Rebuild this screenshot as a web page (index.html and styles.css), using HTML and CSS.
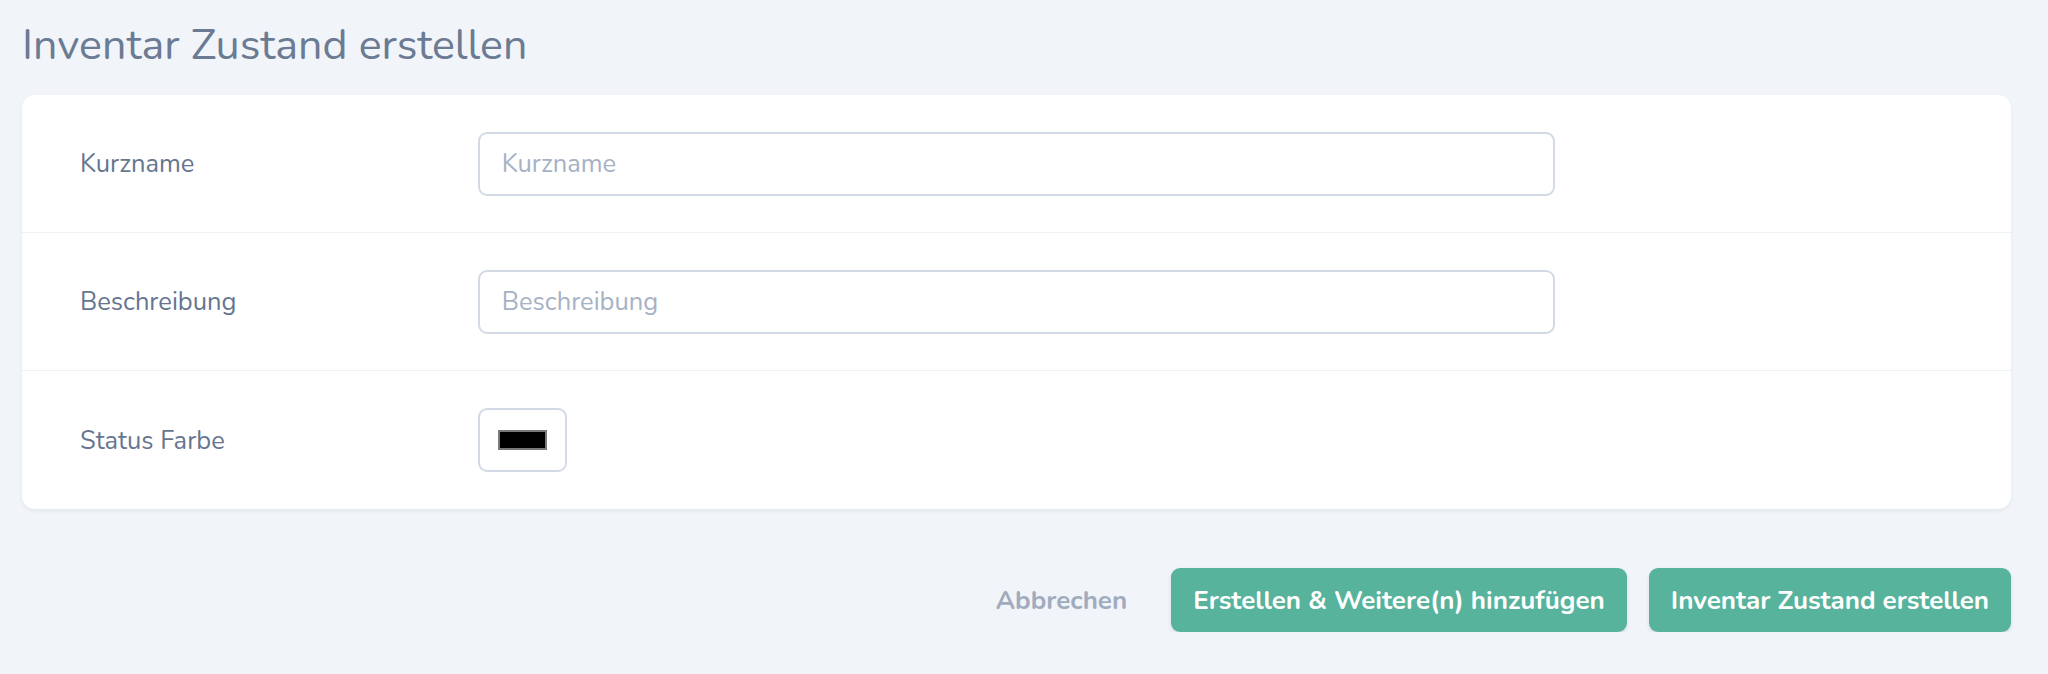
FILE: index.html
```html
<!DOCTYPE html>
<html lang="de">
<head>
    <meta charset="UTF-8">
    <title>Inventar Zustand erstellen</title>
    <link rel="stylesheet" href="styles.css">
</head>
<body>

    <h1 class="page-title">Inventar Zustand erstellen</h1>

    <form class="card">
        <div class="field-row">
            <label class="field-label" for="kurzname">Kurzname</label>
            <div class="field-input">
                <input type="text" id="kurzname" class="form-input" placeholder="Kurzname">
            </div>
        </div>
        <div class="field-row">
            <label class="field-label" for="beschreibung">Beschreibung</label>
            <div class="field-input">
                <input type="text" id="beschreibung" class="form-input" placeholder="Beschreibung">
            </div>
        </div>
        <div class="field-row">
            <label class="field-label" for="farbe">Status Farbe</label>
            <div class="field-input">
                <div class="color-picker" id="farbe">
                    <span class="color-swatch"></span>
                </div>
            </div>
        </div>
    </form>

    <div class="form-actions">
        <a class="btn-link" href="#">Abbrechen</a>
        <button class="btn-primary" type="button">Erstellen &amp; Weitere(n) hinzufügen</button>
        <button class="btn-primary" type="button">Inventar Zustand erstellen</button>
    </div>

</body>
</html>
```

FILE: styles.css
```css
body {
    margin: 0;
    padding: 19px 37px 0 22px;
    background-color: #f1f4f9;
    font-family: Nunito, Lato, "Open Sans", sans-serif;
    color: #66768f;
}
.page-title {
    margin: 0 0 24px 0;
    font-size: 43px;
    line-height: 52px;
    font-weight: normal;
    color: #6b7b93;
}
.card {
    background-color: #fff;
    border-radius: 13px;
    box-shadow: 0 2px 4px rgba(0, 0, 0, 0.06);
}
.field-row {
    display: flex;
    align-items: center;
    height: 138px;
    box-sizing: border-box;
    border-bottom: 1px solid #eef2f6;
}
.field-row:last-child {
    border-bottom: none;
}
.field-label {
    width: 20%;
    padding: 0 58px;
    box-sizing: border-box;
    font-size: 25.5px;
    color: #66768f;
}
.field-input {
    width: 60%;
    padding: 0 58px;
    box-sizing: border-box;
}
.form-input {
    display: block;
    width: 100%;
    height: 64px;
    box-sizing: border-box;
    padding: 0 22px;
    border: 2px solid #d3dae5;
    border-radius: 9px;
    font-family: inherit;
    font-size: 25.5px;
    color: #66768f;
    background: #fff;
}
.form-input::placeholder {
    color: #a6b2c4;
}
.color-picker {
    display: flex;
    align-items: center;
    justify-content: center;
    width: 89px;
    height: 64px;
    box-sizing: border-box;
    border: 2px solid #d3dae5;
    border-radius: 9px;
}
.color-swatch {
    width: 49px;
    height: 20px;
    box-sizing: border-box;
    background-color: #000;
    border: 2px solid #7a7a7a;
}
.form-actions {
    display: flex;
    justify-content: flex-end;
    align-items: center;
    margin-top: 59px;
}
.btn-link {
    margin-right: 22px;
    padding: 0 22px;
    font-size: 26px;
    font-weight: bold;
    color: #a0acbe;
    text-decoration: none;
}
.btn-primary {
    height: 64px;
    margin-left: 22px;
    padding: 0 22px;
    border: none;
    border-radius: 9px;
    background-color: #57b39c;
    box-shadow: 0 2px 4px rgba(0, 0, 0, 0.1);
    font-family: inherit;
    font-size: 26px;
    font-weight: bold;
    color: #fff;
    cursor: pointer;
}
.btn-link + .btn-primary {
    margin-left: 0;
}
```
